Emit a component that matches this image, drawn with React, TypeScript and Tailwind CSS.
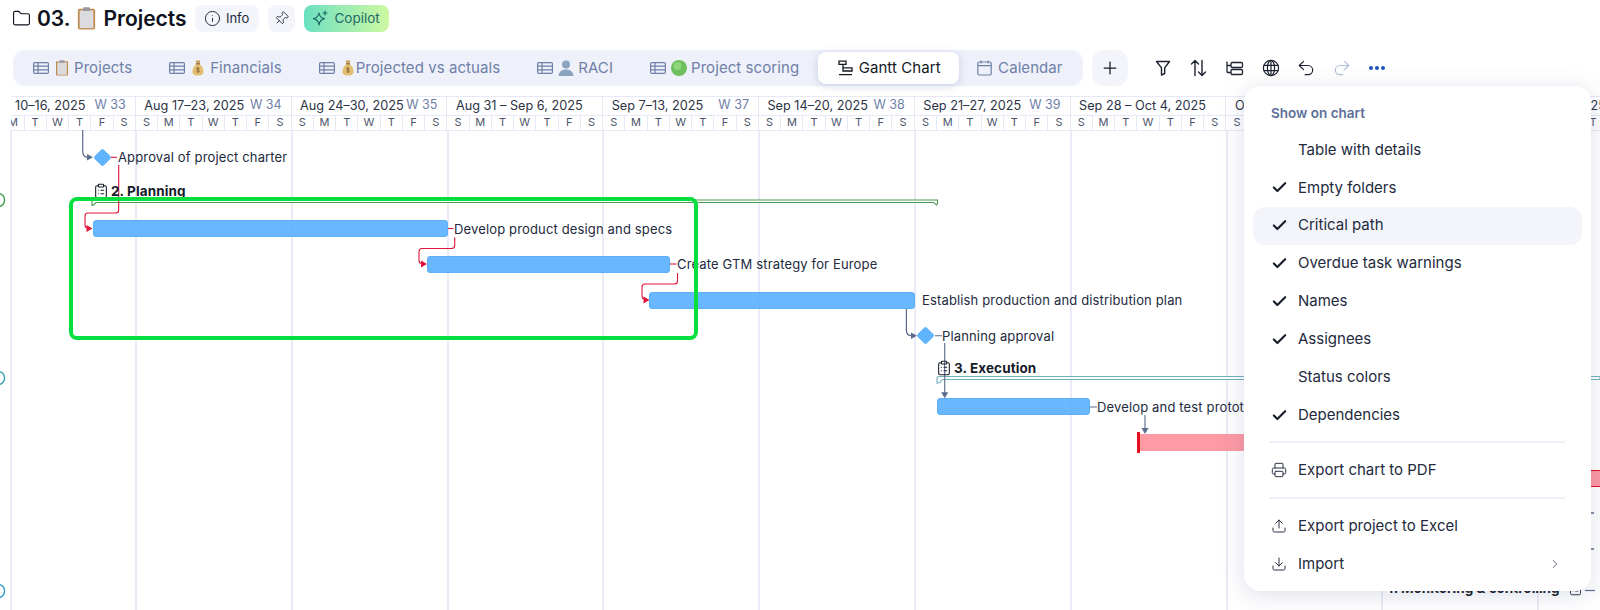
import React from "react";
import { Check, ChevronRight, Download, Folder, Info, Pin, Plus, Printer, Undo2, Redo2, Upload, ClipboardList } from "lucide-react";

const DAYS = ["S", "M", "T", "W", "T", "F", "S"];

const WEEKS = [
  { label: "10–16, 2025", week: "W 33" },
  { label: "Aug 17–23, 2025", week: "W 34" },
  { label: "Aug 24–30, 2025", week: "W 35" },
  { label: "Aug 31 – Sep 6, 2025", week: "" },
  { label: "Sep 7–13, 2025", week: "W 37" },
  { label: "Sep 14–20, 2025", week: "W 38" },
  { label: "Sep 21–27, 2025", week: "W 39" },
  { label: "Sep 28 – Oct 4, 2025", week: "" },
  { label: "Oct 5–11, 2025", week: "W 41" },
  { label: "Oct 12–18, 2025", week: "W 42" },
  { label: "Oct 19–25, 2025", week: "W 43" },
];

const MENU_ITEMS = [
  { label: "Table with details", on: false },
  { label: "Empty folders", on: true },
  { label: "Critical path", on: true, hover: true },
  { label: "Overdue task warnings", on: true },
  { label: "Names", on: true },
  { label: "Assignees", on: true },
  { label: "Status colors", on: false },
  { label: "Dependencies", on: true },
];

function TableIcon() {
  return (
    <svg width="16" height="12" viewBox="0 0 16 12" fill="none" stroke="#6f80a8" strokeWidth="1.2" className="shrink-0">
      <rect x="0.6" y="0.6" width="14.8" height="10.8" rx="1.2" />
      <path d="M0.6 4.2h14.8M0.6 7.8h14.8M5 0.6v10.8" />
    </svg>
  );
}

function ClipboardEmoji({ w, h }: { w: number; h: number }) {
  return (
    <svg width={w} height={h} viewBox="0 0 16 20" className="shrink-0">
      <rect x="0.5" y="1.5" width="15" height="18" rx="1.5" fill="#c08a4e" />
      <rect x="2" y="3" width="12" height="15.4" fill="#dcdcde" />
      <rect x="5" y="0.3" width="6" height="3.2" rx="0.8" fill="#9a9aa0" />
    </svg>
  );
}

function MoneyBag() {
  return (
    <svg width="12" height="16" viewBox="0 0 12 16" className="shrink-0">
      <path d="M3.6 0.6h4.8L7.4 3.6h-2.8z" fill="#c9a05a" />
      <path d="M4.4 4h3.2c2.4 2 4 5 4 7.6 0 3-2.4 4-5.6 4s-5.6-1-5.6-4C0.4 9 2 6 4.4 4z" fill="#e3bd72" />
      <rect x="4" y="3.2" width="4" height="1.2" fill="#8a6a3a" />
      <path d="M7.4 8.4c-.8-.7-2.8-.7-2.8.5s2.8.8 2.8 2.1-2 1.2-2.8.5M6 7.2v5.6" stroke="#7a5a2a" strokeWidth="0.8" fill="none" />
    </svg>
  );
}

function PersonEmoji() {
  return (
    <svg width="16" height="16" viewBox="0 0 16 16" className="shrink-0">
      <circle cx="8" cy="4.6" r="4" fill="#8aa4bf" />
      <path d="M0.6 16c0-4 3-6.6 7.4-6.6s7.4 2.6 7.4 6.6z" fill="#8aa4bf" />
    </svg>
  );
}

function GreenDot() {
  return (
    <svg width="16" height="16" viewBox="0 0 16 16" className="shrink-0">
      <circle cx="8" cy="8" r="8" fill="#6cbf5c" />
      <circle cx="6.5" cy="6" r="4" fill="#8ed67c" />
    </svg>
  );
}

function GanttIcon({ color }: { color: string }) {
  return (
    <svg width="15" height="16" viewBox="0 0 15 16" fill="none" stroke={color} strokeWidth="1.3" className="shrink-0">
      <path d="M1 1.2h7v3.2H1zM5 4.4v3.4h9v3.2H5zM1 14.6h13" />
    </svg>
  );
}

function CalendarIcon() {
  return (
    <svg width="15" height="16" viewBox="0 0 15 16" fill="none" stroke="#6f80a8" strokeWidth="1.2" className="shrink-0">
      <rect x="0.8" y="2" width="13.4" height="13" rx="1.4" />
      <path d="M0.8 5.6h13.4M4 0.4v3M11 0.4v3" />
    </svg>
  );
}

function Tab({ icon, text, active }: { icon: React.ReactNode; text: string; active?: boolean }) {
  return (
    <div
      className={
        active
          ? "flex h-[32px] items-center rounded-lg bg-white pl-[20px] pr-[18px] text-[#14181f] shadow-[0_2px_8px_rgba(90,110,170,0.25)]"
          : "flex h-[32px] items-center px-[18.5px] text-[#6f80a8]"
      }
    >
      {icon}
      <span className="whitespace-nowrap">{text}</span>
    </div>
  );
}

function ToolbarIcons() {
  return (
    <div className="ml-[25px] flex items-center gap-[15.4px] text-[#1c2230]">
      {/* funnel */}
      <svg width="20" height="20" viewBox="0 0 20 20" fill="none" stroke="currentColor" strokeWidth="1.4" strokeLinejoin="round">
        <path d="M3.5 3.5h13l-4.8 6.4v5.6l-3.2 1.6V9.9z" />
      </svg>
      {/* sort */}
      <svg width="21" height="20" viewBox="0 0 21 20" fill="none" stroke="currentColor" strokeWidth="1.4" strokeLinecap="round" strokeLinejoin="round">
        <path d="M7 17.500V2.500M3.500 6l3.500-3.500L10.500 6M14 2.500v15M10.500 14l3.500 3.500 3.500-3.500" />
      </svg>
      {/* grouping */}
      <svg width="21" height="20" viewBox="0 0 21 20" fill="none" stroke="currentColor" strokeWidth="1.3">
        <path d="M3 3.500v10c0 .8.400 1 1 1h3M3 7.500h4" />
        <rect x="7" y="4.500" width="11.500" height="5" rx="1.200" />
        <rect x="7" y="11.500" width="11.500" height="5" rx="1.200" />
      </svg>
      {/* globe */}
      <svg width="20" height="20" viewBox="0 0 20 20" fill="none" stroke="currentColor" strokeWidth="1.2">
        <circle cx="10" cy="10" r="7.6" />
        <ellipse cx="10" cy="10" rx="3.6" ry="7.6" />
        <path d="M10 2.4v15.2M2.6 7.4h14.8M2.6 12.6h14.8" />
      </svg>
      <Undo2 size={20} strokeWidth={1.4} />
      <Redo2 size={20} strokeWidth={1.4} className="text-[#b4bfd6]" />
      <div className="flex w-[20px] justify-center gap-[2px]">
        <span className="h-[4px] w-[4px] rounded-full bg-[#1f55b8]" />
        <span className="h-[4px] w-[4px] rounded-full bg-[#1f55b8]" />
        <span className="h-[4px] w-[4px] rounded-full bg-[#1f55b8]" />
      </div>
    </div>
  );
}

function TimeHeader() {
  return (
    <div className="absolute left-[11px] right-0 top-0 overflow-hidden">
      <div className="ml-[-31px] flex w-[1800px] text-[#2c3346]">
        {WEEKS.map((w, n) => (
          <div key={w.label} className="w-[155.8px] shrink-0 border-r border-[#e6e9f5]">
            <div
              className={`flex h-[19.5px] items-center justify-between whitespace-nowrap border-y border-[#e6e9f5] pr-[9px] text-[12.7px] ${
                n === 0 ? "pl-[35px]" : "pl-[8.5px]"
              }`}
            >
              <span>{w.label}</span>
              <span className="text-[12.5px] text-[#6f80a8]">{w.week}</span>
            </div>
            <div className="flex h-[15px] border-b border-[#e6e9f5] text-[11px] text-[#4c556b]">
              {DAYS.map((d, i) => (
                <div key={i} className="flex flex-1 items-center justify-center border-r border-[#e6e9f5] last:border-r-0">
                  {d}
                </div>
              ))}
            </div>
          </div>
        ))}
      </div>
    </div>
  );
}

function GridLines() {
  return (
    <div className="absolute bottom-0 left-0 right-0 top-[34px] flex pl-[10px]">
      <div className="h-full w-[125px] shrink-0 border-l-2 border-[#eaebf7]" />
      {WEEKS.slice(1).map((w) => (
        <div key={w.label} className="h-full w-[155.8px] shrink-0 border-l-2 border-[#eaebf7]" />
      ))}
    </div>
  );
}

function Links() {
  const red = "#e0153a";
  const grey = "#5b6b8c";
  return (
    <svg className="absolute left-0 top-0" width="1600" height="514" viewBox="0 96 1600 514" fill="none">
      {/* left edge circles */}
      <circle cx="-2" cy="200" r="6.6" stroke="#3f9e4a" strokeWidth="1.4" fill="#fff" />
      <circle cx="-2" cy="378" r="6.6" stroke="#3a9fb5" strokeWidth="1.4" fill="#fff" />
      <circle cx="-2" cy="591" r="6.6" stroke="#2f9bc9" strokeWidth="1.4" fill="#fff" />

      {/* summary bars */}
      <path d="M92 205.5v-5.5h845.5v3.5l-1 1.5-3-2.5H96l-2.5 2.5z" stroke="#4c9a54" strokeWidth="1.1" fill="#fff" />
      <path d="M937 383v-4c0-1.5 1-2.5 2.500-2.500H1600v3H943c-2 0-2 2-3 3z" stroke="#6fb0bd" strokeWidth="1.1" fill="#fff" />

      {/* grey links */}
      <path d="M82.700 130v21c0 4 2 6.300 5 6.300h3" stroke={grey} strokeWidth="1.2" />
      <path d="M93 157.300l-6-3.300v6.600z" fill={grey} />
      <path d="M906.400 309v21c0 4 2 5.700 5 5.700h3" stroke={grey} strokeWidth="1.2" />
      <path d="M917 335.700l-6-3.300v6.600z" fill={grey} />
      <path d="M935 335.700h7M944.700 343v52" stroke={grey} strokeWidth="1.100" />
      <path d="M944.700 398.300l-3.500-6h7z" fill={grey} />
      <path d="M1090 407h7M1145 415v16" stroke={grey} strokeWidth="1.100" />
      <path d="M1145 434l-3.500-6h7z" fill={grey} />
      <path d="M1591 513h3M1591 549h3" stroke={grey} strokeWidth="1.500" />
      <path d="M1585 590.500h10" stroke={grey} strokeWidth="1.200" />

      {/* critical path */}
      <path d="M111 157.300h6" stroke={red} strokeWidth="1.100" />
      <path d="M118.700 165v45c0 2-1 3-3 3H88c-2 0-3 1-3 3v9c0 2 1 3 3 3h2" stroke={red} strokeWidth="1.100" />
      <path d="M92.500 228.500l-6-3.600v7.200z" fill={red} />
      <path d="M447.500 228.500h6" stroke={red} strokeWidth="1.100" />
      <path d="M454.700 237.500v8c0 2-1 3-3 3H422c-2 0-3 1-3 3v9c0 2 1 3 3 3h2" stroke={red} strokeWidth="1.100" />
      <path d="M427 264l-6-3.600v7.200z" fill={red} />
      <path d="M670 264h6.500" stroke={red} strokeWidth="1.100" />
      <path d="M677.500 273v8c0 2-1 3-3 3H645c-2 0-3 1-3 3v9c0 2 1 3 3 3h1.500" stroke={red} strokeWidth="1.100" />
      <path d="M649.500 300l-6-3.600v7.200z" fill={red} />
    </svg>
  );
}

function Label({ className, children }: { className: string; children: React.ReactNode }) {
  return (
    <div className={`absolute -translate-y-1/2 whitespace-nowrap text-[13px] leading-5 tracking-[0.15px] text-[#232a3d] ${className}`}>
      {children}
    </div>
  );
}

function GroupLabel({ className, children }: { className: string; children: React.ReactNode }) {
  return (
    <div className={`absolute flex -translate-y-1/2 items-center gap-[2px] whitespace-nowrap text-[13.500px] font-bold leading-5 tracking-[0.1px] text-[#171c2b] ${className}`}>
      <ClipboardList size={16} strokeWidth={1.600} />
      <span>{children}</span>
    </div>
  );
}

function Bars() {
  const bar = "absolute h-[17px] rounded-[3px] border border-[#5cb0fb] bg-[#4fabff]/85";
  const diamond = "absolute h-[13px] w-[13px] rotate-45 rounded-[2px] bg-[#5fb4fd]";
  return (
    <>
      <div className={`${diamond} left-[95.500px] top-[54.800px]`} />
      <div className={`${diamond} left-[919px] top-[233.200px]`} />

      <div className={`${bar} left-[92.500px] top-[124px] w-[355px]`} />
      <div className={`${bar} left-[427px] top-[159.800px] w-[243px]`} />
      <div className={`${bar} left-[649px] top-[195.500px] w-[266px]`} />
      <div className={`${bar} left-[937px] top-[302.200px] w-[153px]`} />

      <div className="absolute left-[1137px] top-[336px] flex h-[21px] w-[107px] items-center">
        <div className="h-full w-[3px] shrink-0 bg-[#e3101f]" />
        <div className="h-[17px] flex-1 bg-[#fd8f9a] opacity-90" />
      </div>
      <div className="absolute left-[1591px] top-[374px] h-[17px] w-[9px] border-y border-[#e3101f] bg-[#fd98a2]" />

      <Label className="left-[118px] top-[61.300px]">Approval of project charter</Label>
      <Label className="left-[454px] top-[132.500px]">Develop product design and specs</Label>
      <Label className="left-[677px] top-[168px]">Create GTM strategy for Europe</Label>
      <Label className="left-[922px] top-[204px]">Establish production and distribution plan</Label>
      <Label className="left-[942px] top-[239.700px]">Planning approval</Label>
      <Label className="left-[1097px] top-[311px]">Develop and test prototype</Label>

      <GroupLabel className="left-[93px] top-[94.500px]">2. Planning</GroupLabel>
      <GroupLabel className="left-[936px] top-[272px]">3. Execution</GroupLabel>
      <div className="absolute left-[1385px] top-[482px] flex h-5 items-center gap-[8px] whitespace-nowrap text-[13.500px] font-bold text-[#171c2b]">
        <span>4. Monitoring &amp; controlling</span>
        <ClipboardList size={15} strokeWidth={1.400} />
      </div>

      {/* highlight drawn over the chart */}
      <div className="absolute left-[68.500px] top-[101px] h-[143px] w-[629px] rounded-lg border-4 border-[#05e040]" />
    </>
  );
}

function MenuRow({ icon, label, hover, trailing }: { icon: React.ReactNode; label: string; hover?: boolean; trailing?: React.ReactNode }) {
  return (
    <div className={`flex h-[37.900px] items-center rounded-xl pl-[18px] pr-[20px] ${hover ? "bg-[#f3f5fb]" : ""}`}>
      <div className="flex w-[27px] shrink-0 items-center">{icon}</div>
      <span className="flex-1 text-[15px] text-[#232a3d]">{label}</span>
      {trailing}
    </div>
  );
}

function ChartMenu() {
  return (
    <div className="absolute left-[1244px] top-[86px] h-[505px] w-[347px] rounded-2xl bg-white px-[9px] pt-[16px] shadow-[0_4px_24px_rgba(70,85,140,0.18)]">
      <div className="flex h-[22px] items-center pl-[18px] text-[13.500px] font-semibold text-[#5d6f99]">Show on chart</div>
      <div className="mt-[7px]">
        {MENU_ITEMS.map((m) => (
          <MenuRow
            key={m.label}
            label={m.label}
            hover={m.hover}
            icon={m.on ? <Check size={17} strokeWidth={3} className="text-[#171c2b]" /> : null}
          />
        ))}
      </div>
      <div className="mx-[17px] mt-[7px] h-[2px] bg-[#eef0f7]" />
      <div className="mt-[8px]">
        <MenuRow label="Export chart to PDF" icon={<Printer size={16} strokeWidth={1.500} className="text-[#2c3346]" />} />
      </div>
      <div className="mx-[17px] mt-[8px] h-[2px] bg-[#eef0f7]" />
      <div className="mt-[8px]">
        <MenuRow label="Export project to Excel" icon={<Upload size={16} strokeWidth={1.500} className="text-[#2c3346]" />} />
        <MenuRow
          label="Import"
          icon={<Download size={16} strokeWidth={1.500} className="text-[#2c3346]" />}
          trailing={<ChevronRight size={14} strokeWidth={1.500} className="text-[#4c556b]" />}
        />
      </div>
    </div>
  );
}

export default function App() {
  return (
    <div className="relative h-[610px] w-[1600px] overflow-hidden bg-white font-[Inter,sans-serif]">
      {/* Title row */}
      <div className="flex h-[50px] items-start pl-[12px] pt-[5px]">
        <div className="flex h-[27px] items-center text-[21px] font-semibold text-[#0e1220]">
          <Folder size={19} strokeWidth={1.400} className="mr-[6px]" />
          <span>03.</span>
          <span className="ml-[7px] mr-[7px]">
            <ClipboardEmoji w={19} h={23} />
          </span>
          <span>Projects</span>
        </div>
        <button className="ml-[8px] flex h-[27px] w-[64px] items-center justify-center gap-[5px] rounded-lg bg-[#f3f5fb] text-[13px] text-[#232a3d]">
          <Info size={17} strokeWidth={1.400} />
          Info
        </button>
        <button className="ml-[9px] flex h-[27px] w-[27px] items-center justify-center rounded-lg bg-[#f3f5fb] text-[#232a3d]">
          <Pin size={15} strokeWidth={1.400} className="rotate-45" />
        </button>
        <button className="ml-[9px] flex h-[27px] w-[85px] items-center justify-center gap-[5px] rounded-lg bg-gradient-to-r from-[#68e0bf] to-[#cdf8a2] text-[13.500px] text-[#1f6a66]">
          <svg width="17" height="17" viewBox="0 0 17 17" fill="none" stroke="currentColor" strokeWidth="1.200" strokeLinejoin="round">
            <path d="M7 3c.6 3.400 2 5 5.500 5.700C9 9.400 7.600 11 7 15c-.6-4-2-5.600-5.500-6.300C5 8 6.400 6.400 7 3z" />
            <path d="M13 1v4M11 3h4" strokeLinecap="round" />
          </svg>
          Copilot
        </button>
      </div>

      {/* Tabs and toolbar */}
      <div className="flex h-[36px] items-center pl-[13px]">
        <div className="flex h-[36px] items-center rounded-xl bg-[#eef1f9] px-[1.500px] text-[15px] tracking-[0.07px]">
          <Tab icon={<><TableIcon /><span className="ml-[6px] mr-[5px]"><ClipboardEmoji w={14} h={16} /></span></>} text="Projects" />
          <Tab icon={<><TableIcon /><span className="ml-[7px] mr-[6px]"><MoneyBag /></span></>} text="Financials" />
          <Tab icon={<><TableIcon /><span className="ml-[7px] mr-[2px]"><MoneyBag /></span></>} text="Projected vs actuals" />
          <Tab icon={<><TableIcon /><span className="ml-[5px] mr-[4px]"><PersonEmoji /></span></>} text="RACI" />
          <Tab icon={<><TableIcon /><span className="ml-[5px] mr-[4px]"><GreenDot /></span></>} text="Project scoring" />
          <Tab active icon={<span className="mr-[6px]"><GanttIcon color="#14181f" /></span>} text="Gantt Chart" />
          <Tab icon={<span className="mr-[6px]"><CalendarIcon /></span>} text="Calendar" />
        </div>
        <div className="ml-[9px] flex h-[36px] w-[36px] items-center justify-center rounded-xl bg-[#f3f5fb] text-[#171c2b]">
          <Plus size={20} strokeWidth={1.500} />
        </div>
        <ToolbarIcons />
      </div>

      {/* Gantt canvas */}
      <div className="absolute left-0 top-[96px] h-[514px] w-[1600px]">
        <GridLines />
        <TimeHeader />
        <Links />
        <Bars />
      </div>

      <ChartMenu />
    </div>
  );
}
